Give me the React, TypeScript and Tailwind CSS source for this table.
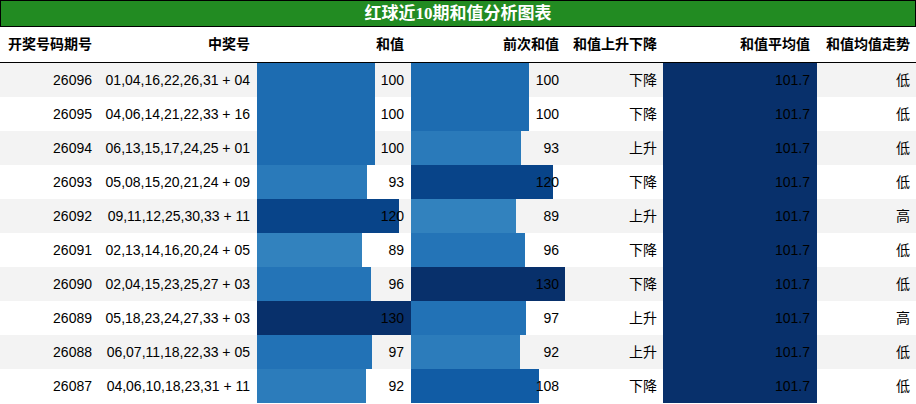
import React from 'react'

type Row = {
  issue: string
  nums: string
  sum: number
  prev: number
  dir: string
  avg: string
  trend: string
}

const rows: Row[] = [
  { issue: '26096', nums: '01,04,16,22,26,31 + 04', sum: 100, prev: 100, dir: '下降', avg: '101.7', trend: '低' },
  { issue: '26095', nums: '04,06,14,21,22,33 + 16', sum: 100, prev: 100, dir: '下降', avg: '101.7', trend: '低' },
  { issue: '26094', nums: '06,13,15,17,24,25 + 01', sum: 100, prev: 93, dir: '上升', avg: '101.7', trend: '低' },
  { issue: '26093', nums: '05,08,15,20,21,24 + 09', sum: 93, prev: 120, dir: '下降', avg: '101.7', trend: '低' },
  { issue: '26092', nums: '09,11,12,25,30,33 + 11', sum: 120, prev: 89, dir: '上升', avg: '101.7', trend: '高' },
  { issue: '26091', nums: '02,13,14,16,20,24 + 05', sum: 89, prev: 96, dir: '下降', avg: '101.7', trend: '低' },
  { issue: '26090', nums: '02,04,15,23,25,27 + 03', sum: 96, prev: 130, dir: '下降', avg: '101.7', trend: '低' },
  { issue: '26089', nums: '05,18,23,24,27,33 + 03', sum: 130, prev: 97, dir: '上升', avg: '101.7', trend: '高' },
  { issue: '26088', nums: '06,07,11,18,22,33 + 05', sum: 97, prev: 92, dir: '上升', avg: '101.7', trend: '低' },
  { issue: '26087', nums: '04,06,10,18,23,31 + 11', sum: 92, prev: 108, dir: '下降', avg: '101.7', trend: '低' },
]

// matplotlib "Blues"
const blues: [number, number, number][] = [
  [247, 251, 255],
  [222, 235, 247],
  [198, 219, 239],
  [158, 202, 225],
  [107, 174, 214],
  [66, 146, 198],
  [33, 113, 181],
  [8, 81, 156],
  [8, 48, 107],
]

function bluesAt(t: number) {
  const x = Math.max(0, Math.min(1, t)) * (blues.length - 1)
  const i = Math.min(Math.floor(x), blues.length - 2)
  const f = x - i
  const c = blues[i].map((v, k) => Math.round(v + (blues[i + 1][k] - v) * f))
  return `rgb(${c[0]},${c[1]},${c[2]})`
}

const MAX = 130

function barStyle(v: number): React.CSSProperties {
  const pct = (v / MAX) * 100
  const col = bluesAt(v / MAX)
  return { background: `linear-gradient(90deg, ${col} ${pct}%, transparent ${pct}%)` }
}

const cols = 'grid grid-cols-[100px_157px_154px_154px_98px_154px_99px]'
const cjk = { fontFamily: '"Liberation Sans", "Noto Sans CJK SC", sans-serif' }

export default function App() {
  return (
    <div className="w-[916px] h-[404px] bg-white text-[14px] text-black overflow-hidden whitespace-nowrap" style={cjk}>
      <div
        className="h-[27px] bg-[#228b22] border border-black flex items-center justify-center text-white font-bold text-[17px]"
        style={{ fontFamily: '"Liberation Serif", "Noto Sans CJK SC", serif' }}
      >
        红球近10期和值分析图表
      </div>
      <div className={`${cols} h-[36px] border-b border-black font-bold items-center`}>
        <div className="px-2 text-right">开奖号码期号</div>
        <div className="px-[7px] text-right">中奖号</div>
        <div className="px-[7px] text-right">和值</div>
        <div className="px-[6px] text-right">前次和值</div>
        <div className="px-[6px] text-right">和值上升下降</div>
        <div className="px-[7px] text-right">和值平均值</div>
        <div className="px-[6px] text-right">和值均值走势</div>
      </div>
      {rows.map((r, i) => (
        <div key={r.issue} className={`${cols} h-[34px] ${i % 2 === 0 ? 'bg-[#f3f3f3]' : 'bg-white'}`}>
          <div className="px-[8px] flex items-center justify-end">{r.issue}</div>
          <div className="pr-[7px] flex items-center justify-end">{r.nums}</div>
          <div className="px-[7px] flex items-center justify-end" style={barStyle(r.sum)}>
            {r.sum}
          </div>
          <div className="px-[6px] flex items-center justify-end" style={barStyle(r.prev)}>
            {r.prev}
          </div>
          <div className="px-[6px] flex items-center justify-end">{r.dir}</div>
          <div className="px-[7px] flex items-center justify-end bg-[#08306b]">{r.avg}</div>
          <div className="px-[6px] flex items-center justify-end">{r.trend}</div>
        </div>
      ))}
    </div>
  )
}
